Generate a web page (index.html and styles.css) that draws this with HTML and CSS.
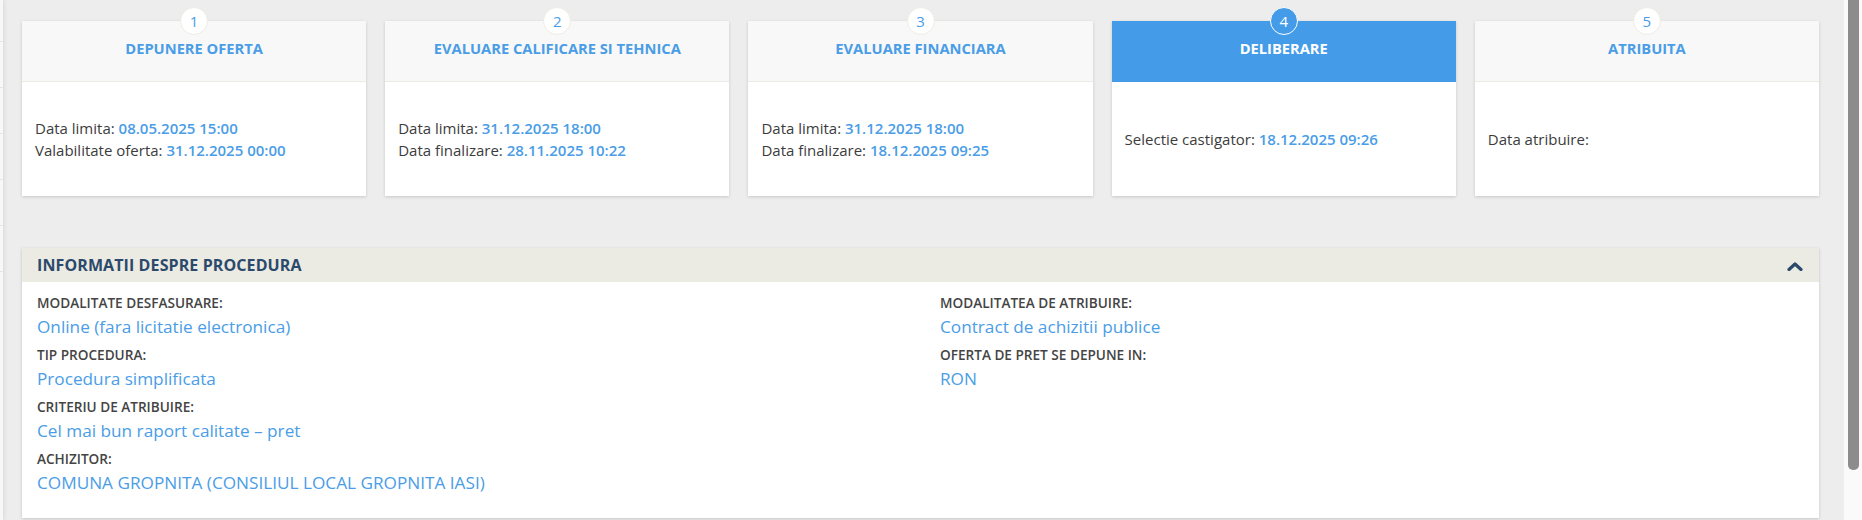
FILE: index.html
```html
<!DOCTYPE html>
<html lang="ro">
<head>
<meta charset="utf-8">
<title>Procedura</title>
<link rel="stylesheet" href="styles.css">
</head>
<body>
<div class="page">
  <aside class="sidebar">
    <div class="side-item"></div>
    <div class="side-item"></div>
    <div class="side-item"></div>
    <div class="side-item"></div>
    <div class="side-item"></div>
    <div class="side-item"></div>
  </aside>
  <main class="main">
    <section class="steps">
      <div class="step">
        <div class="step-num">1</div>
        <div class="step-head">DEPUNERE OFERTA</div>
        <div class="step-body">
          <div>Data limita: <span class="val">08.05.2025 15:00</span></div>
          <div>Valabilitate oferta: <span class="val">31.12.2025 00:00</span></div>
        </div>
      </div>
      <div class="step">
        <div class="step-num">2</div>
        <div class="step-head">EVALUARE CALIFICARE SI TEHNICA</div>
        <div class="step-body">
          <div>Data limita: <span class="val">31.12.2025 18:00</span></div>
          <div>Data finalizare: <span class="val">28.11.2025 10:22</span></div>
        </div>
      </div>
      <div class="step">
        <div class="step-num">3</div>
        <div class="step-head">EVALUARE FINANCIARA</div>
        <div class="step-body">
          <div>Data limita: <span class="val">31.12.2025 18:00</span></div>
          <div>Data finalizare: <span class="val">18.12.2025 09:25</span></div>
        </div>
      </div>
      <div class="step step-active">
        <div class="step-num">4</div>
        <div class="step-head">DELIBERARE</div>
        <div class="step-body">
          <div>Selectie castigator: <span class="val">18.12.2025 09:26</span></div>
        </div>
      </div>
      <div class="step">
        <div class="step-num">5</div>
        <div class="step-head">ATRIBUITA</div>
        <div class="step-body">
          <div>Data atribuire:</div>
        </div>
      </div>
    </section>

    <section class="panel">
      <div class="panel-head">
        <span class="panel-title">INFORMATII DESPRE PROCEDURA</span>
        <svg class="chev" width="16" height="10" viewBox="0 0 16 10"><polyline points="2,8.5 8,3 14,8.5" fill="none" stroke="#2b4a6b" stroke-width="3.2" stroke-linecap="round" stroke-linejoin="round"/></svg>
      </div>
      <div class="panel-body">
        <div class="col">
          <div class="field"><div class="lbl">MODALITATE DESFASURARE:</div><div class="fval">Online (fara licitatie electronica)</div></div>
          <div class="field"><div class="lbl">TIP PROCEDURA:</div><div class="fval">Procedura simplificata</div></div>
          <div class="field"><div class="lbl">CRITERIU DE ATRIBUIRE:</div><div class="fval">Cel mai bun raport calitate – pret</div></div>
          <div class="field"><div class="lbl">ACHIZITOR:</div><div class="fval">COMUNA GROPNITA (CONSILIUL LOCAL GROPNITA IASI)</div></div>
        </div>
        <div class="col">
          <div class="field"><div class="lbl">MODALITATEA DE ATRIBUIRE:</div><div class="fval">Contract de achizitii publice</div></div>
          <div class="field"><div class="lbl">OFERTA DE PRET SE DEPUNE IN:</div><div class="fval">RON</div></div>
        </div>
      </div>
    </section>
  </main>
  <div class="scrollbar"><div class="thumb"></div></div>
</div>
</body>
</html>
```

FILE: styles.css
```css
* { box-sizing: border-box; }
html, body { margin: 0; padding: 0; }
body {
  background: #ededed;
  font-family: "Open Sans", "Liberation Sans", sans-serif;
  color: #3a3a3a;
  overflow: hidden;
}
.page {
  display: flex;
  height: 520px;
  overflow: hidden;
}
.sidebar {
  width: 3px;
  flex: none;
  background: #f7f7f7;
  box-shadow: 1px 0 4px rgba(0,0,0,0.10);
  position: relative;
  z-index: 1;
}
.side-item {
  height: 46px;
  border-bottom: 1px solid #e4e4e4;
}
.side-item:first-child { height: 42px; }
.main {
  flex: 1;
  padding: 21px 25px 0 19px;
  min-width: 0;
}
.steps {
  display: flex;
  gap: 19px;
}
.step {
  flex: 1;
  position: relative;
  background: #fff;
  height: 175px;
  display: flex;
  flex-direction: column;
  box-shadow: 0 1px 3px rgba(0,0,0,0.16);
}
.step-num {
  position: absolute;
  left: 50%;
  top: -14px;
  width: 28px;
  height: 28px;
  margin-left: -14px;
  border-radius: 50%;
  background: #fff;
  border: 1px solid #efece2;
  color: #4a9de6;
  font-size: 15px;
  line-height: 26px;
  text-align: center;
}
.step-head {
  height: 61px;
  flex: none;
  background: #f8f8f8;
  border-bottom: 1px solid #ecebe3;
  color: #4a9de6;
  font-weight: 700;
  font-size: 14.7px;
  line-height: 20px;
  text-align: center;
  padding-top: 17px;
}
.step-body {
  flex: 1;
  display: flex;
  flex-direction: column;
  justify-content: center;
  padding: 0 13px 0;
  font-size: 15px;
  line-height: 22px;
  color: #3c3c3c;
}
.val {
  color: #4a9de6;
  font-weight: 600;
}
.step-active .step-head {
  background: #449be8;
  border-bottom-color: #449be8;
  color: #fff;
}
.step-active .step-num {
  background: #449be8;
  border: 1.5px solid #fff;
  color: #fff;
}
.panel {
  margin-top: 52px;
  background: #fff;
  box-shadow: 0 1px 3px rgba(0,0,0,0.18);
  height: 270px;
}
.panel-head {
  height: 34px;
  background: #ecebe3;
  display: flex;
  align-items: center;
  justify-content: space-between;
  padding: 0 16px 0 15px;
}
.panel-title {
  color: #2b4a6b;
  font-weight: 700;
  font-size: 16px;
  letter-spacing: 0.1px;
}
.chev { display: block; margin-top: 1px; }
.panel-body {
  display: grid;
  grid-template-columns: 903px 1fr;
  padding: 11px 15px 0;
}
.field {
  margin-bottom: 4px;
}
.lbl {
  font-size: 13.6px;
  font-weight: 600;
  color: #444;
  line-height: 20px;
}
.fval {
  font-size: 17.2px;
  color: #4a9de6;
  line-height: 28px;
}
.scrollbar {
  width: 18px;
  flex: none;
  background: #fafafa;
  padding-left: 4px;
}
.thumb {
  width: 11px;
  height: 470px;
  background: #8c8c8c;
  border-radius: 0 0 5px 5px;
}
```
